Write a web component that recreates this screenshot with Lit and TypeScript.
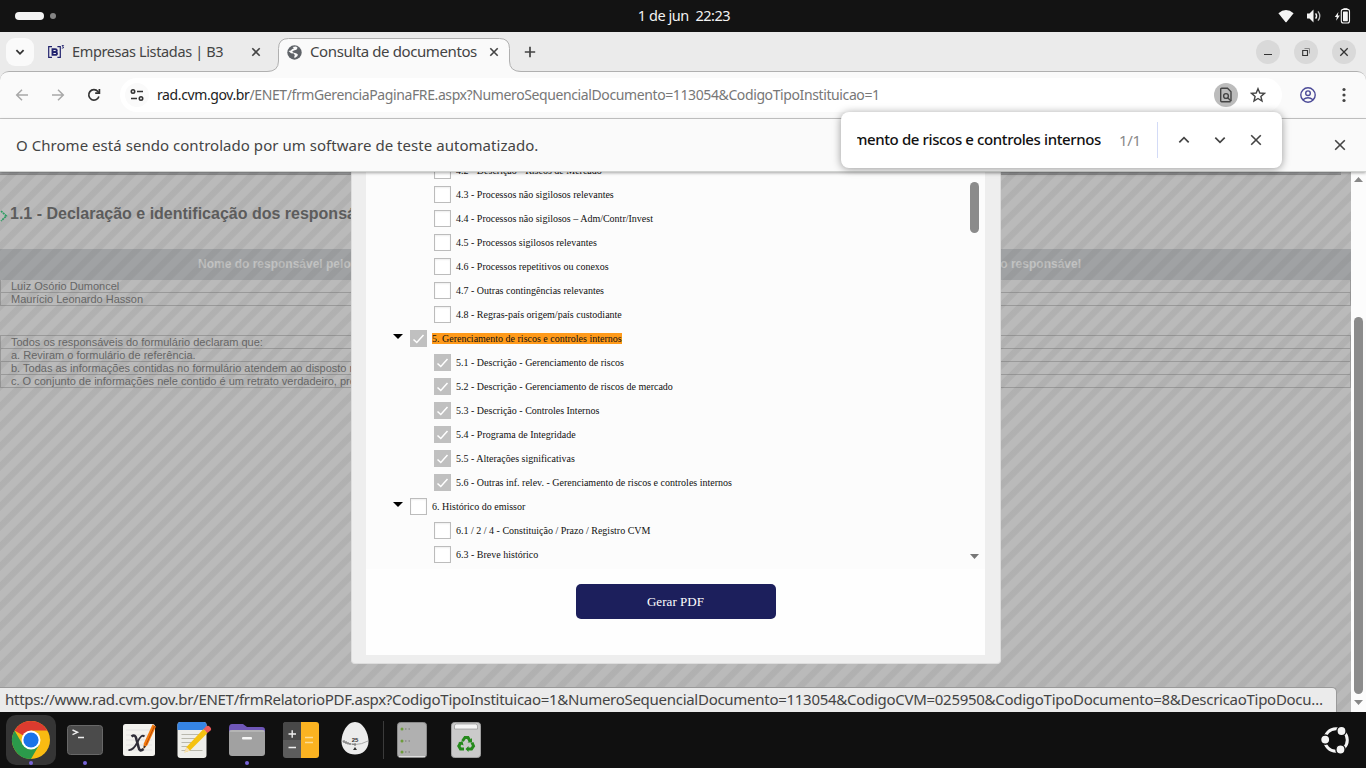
import { LitElement, html, css, svg } from "lit";
import { customElement } from "lit/decorators.js";
import { classMap } from "lit/directives/class-map.js";

interface TreeRow {
  text: string;
  level: number;
  checked?: boolean;
  hit?: boolean;
}

const ROWS: TreeRow[] = [
  { text: "4.2 - Descrição - Riscos de Mercado", level: 1 },
  { text: "4.3 - Processos não sigilosos relevantes", level: 1 },
  { text: "4.4 - Processos não sigilosos – Adm/Contr/Invest", level: 1 },
  { text: "4.5 - Processos sigilosos relevantes", level: 1 },
  { text: "4.6 - Processos repetitivos ou conexos", level: 1 },
  { text: "4.7 - Outras contingências relevantes", level: 1 },
  { text: "4.8 - Regras-país origem/país custodiante", level: 1 },
  { text: "5. Gerenciamento de riscos e controles internos", level: 0, checked: true, hit: true },
  { text: "5.1 - Descrição - Gerenciamento de riscos", level: 1, checked: true },
  { text: "5.2 - Descrição - Gerenciamento de riscos de mercado", level: 1, checked: true },
  { text: "5.3 - Descrição - Controles Internos", level: 1, checked: true },
  { text: "5.4 - Programa de Integridade", level: 1, checked: true },
  { text: "5.5 - Alterações significativas", level: 1, checked: true },
  { text: "5.6 - Outras inf. relev. - Gerenciamento de riscos e controles internos", level: 1, checked: true },
  { text: "6. Histórico do emissor", level: 0 },
  { text: "6.1 / 2 / 4 - Constituição / Prazo / Registro CVM", level: 1 },
  { text: "6.3 - Breve histórico", level: 1 },
];

const cross = (s: number) => html`<svg width="12" height="12" viewBox="0 0 12 12" fill="none" stroke="#444" stroke-width="1.6"><path d="M${6 - s} ${6 - s}L${6 + s} ${6 + s}M${6 + s} ${6 - s}L${6 - s} ${6 + s}" /></svg>`;

@customElement("system-bar")
export class SystemBar extends LitElement {
  static styles = css`
    :host { display: grid; grid-template-columns: 1fr auto 1fr; align-items: center; height: 32px; background: #131313; color: #f2f2f2; font: 15px/20px "Noto Sans", sans-serif; }
    .spaces { display: flex; align-items: center; gap: 6px; padding-left: 15px; }
    .pill { width: 29px; height: 8px; border-radius: 4px; background: #f4f4f4; }
    .dot { width: 6px; height: 6px; border-radius: 50%; background: #858585; }
    .clock { font-size: 14.5px; letter-spacing: -0.45px; white-space: pre; padding: 0 0 3px 2px; }
    .tray { display: flex; justify-content: flex-end; align-items: center; padding-right: 15px; gap: 12px; }
    svg { display: block; }
  `;
  render() {
    return html`
      <div class="spaces"><div class="pill"></div><div class="dot"></div></div>
      <div class="clock">1 de jun  22:23</div>
      <div class="tray">
        <svg width="16" height="16" viewBox="0 0 16 16"><path d="M.4 5.2Q8-1.4 15.6 5.2L8.6 14Q8 14.7 7.4 14Z" fill="#f4f4f4" /></svg>
        <svg width="16" height="16" viewBox="0 0 16 16" fill="none" stroke="#f4f4f4"><path d="M1 5.5H3.5L7.5 1.5V14.5L3.5 10.5H1Z" fill="#f4f4f4" stroke="none" /><path d="M9.6 5.3Q11.6 8 9.6 10.7" stroke-width="1.4" /><path d="M12 3.3Q15.6 8 12 12.7" stroke-width="1.3" stroke="#bbb" /></svg>
        <svg width="17" height="16" viewBox="0 0 17 16"><path d="M4.4 4L.8 9H2.8L2.2 12.8L5.8 7.6H3.8Z" fill="#f4f4f4" /><rect x="7.3" y="1.4" width="8.2" height="13.6" rx="2" fill="none" stroke="#f4f4f4" stroke-width="1.1" /><rect x="9" y="3.4" width="4.8" height="9.8" rx=".6" fill="#f4f4f4" /><path d="M9.5 .8H13.4" stroke="#f4f4f4" stroke-width="1.2" /></svg>
      </div>`;
  }
}

@customElement("tab-strip")
export class TabStrip extends LitElement {
  static styles = css`
    :host { display: flex; align-items: center; height: 39px; background: #ebebeb; color: #444; font: 15px/20px "Noto Sans", sans-serif; padding-left: 6px; }
    svg { display: block; flex: none; }
    .search { display: grid; place-items: center; width: 28px; height: 28px; border-radius: 9px; background: #fafafa; margin-top: 1px; }
    .tab { display: flex; align-items: center; box-sizing: border-box; height: 39px; position: relative; padding-top: 1px; }
    .first { width: 244px; padding-left: 13px; }
    .active { width: 232px; padding-left: 9px; }
    .shape { position: absolute; left: -12px; top: 0; }
    .label { position: relative; white-space: nowrap; padding-bottom: 2px; }
    .first .label { width: 178px; padding-left: 7px; margin-right: 0; font-size: 14.5px; letter-spacing: -0.36px; }
    .active .label { width: 178px; padding-left: 8px; letter-spacing: -0.4px; }
    .glyph { position: relative; }
    .plus { margin: 1px 0 0 14px; }
    .controls { display: flex; gap: 14px; margin: 1px 10px 0 auto; }
    .ctl { display: grid; place-items: center; width: 24px; height: 24px; border-radius: 50%; background: #d9d9d9; }
  `;
  render() {
    return html`
      <div class="search"><svg width="12" height="12" viewBox="0 0 12 12"><path d="M2.4 4.2L6 7.8L9.6 4.2" fill="none" stroke="#333" stroke-width="1.8" /></svg></div>
      <div class="tab first">
        <svg width="18" height="16" viewBox="0 0 18 16" fill="none" stroke="#23246f" stroke-width="1.2"><path d="M5 2.6H1.7V13.4H5M10.4 2.6H13.3V13.4H10.4" /><path d="M5.5 5.1V10.9H8.3Q10 10.9 10 9.4Q10 8.2 8.7 8Q9.8 7.7 9.8 6.5Q9.8 5.1 8.2 5.1ZM5.5 8H8.6" stroke-width="1.9" /><path d="M14.8 1.5H16.6L15.6 2.6Q17 2.8 16.4 3.9L14.8 4.2" stroke-width=".9" /></svg>
        <div class="label">Empresas Listadas | B3</div>
        ${cross(3.7)}
      </div>
      <div class="tab active">
        <svg class="shape" width="256" height="40" viewBox="0 0 256 40"><path d="M0 40V39.5H1Q12.5 39.5 12.5 29V16.5Q12.5 6.5 22.5 6.5H233.5Q243.5 6.5 243.5 16.5V29Q243.5 39.5 255 39.5H256V40Z" fill="#fafafa" /><path d="M0 39.5H1Q12.5 39.5 12.5 29V16.5Q12.5 6.5 22.5 6.5H233.5Q243.5 6.5 243.5 16.5V29Q243.5 39.5 255 39.5H256" fill="none" stroke="#b0b0b0" /></svg>
        <svg class="glyph" width="15" height="15" viewBox="0 0 15 15"><circle cx="7.5" cy="7.5" r="7.2" fill="#5f6368" /><path d="M1.5 6L4 8.2L6.8 8.6L7.8 10.2L7 12.6L8.2 12.8L10.5 11L10.8 9.2L9 8.2L6 7.6L5.3 6.3L7.5 5.3L9.5 4.8L10.6 2.7L9 1.6L5.6 2L7 3.2L5 4.2L3.8 5.6Z" fill="#fafafa" /></svg>
        <div class="label">Consulta de documentos</div>
        <div class="glyph">${cross(3.7)}</div>
      </div>
      <svg class="plus" width="12" height="12" viewBox="0 0 12 12"><path d="M6 .8V11.2M.8 6H11.2" stroke="#444" stroke-width="1.7" /></svg>
      <div class="controls">
        <div class="ctl"><svg width="12" height="12" viewBox="0 0 12 12"><path d="M2 8.5H10" stroke="#333" /></svg></div>
        <div class="ctl"><svg width="12" height="12" viewBox="0 0 12 12" fill="none" stroke="#333"><path d="M2.7 4.5H7.5V9.5H2.7Z" stroke-width="1.1" /><path d="M4.5 2.5H9.5V7.5" stroke="#888" /></svg></div>
        <div class="ctl"><svg width="12" height="12" viewBox="0 0 12 12"><path d="M2.3 2.3L9.7 9.7M9.7 2.3L2.3 9.7" stroke="#333" stroke-width="1.3" /></svg></div>
      </div>`;
  }
}

@customElement("address-bar")
export class AddressBar extends LitElement {
  static styles = css`
    :host { display: block; background: #ebebeb; height: 48px; }
    .bar { box-sizing: border-box; height: 48px; display: flex; align-items: center; background: #fafafa; border-top: 1px solid #b0b0b0; border-bottom: 1px solid #c9c9c9; border-radius: 9px 9px 0 0; padding-left: 14px; }
    svg { display: block; flex: none; }
    .nav { display: flex; gap: 20px; width: 106px; }
    .omni { box-sizing: border-box; display: flex; align-items: center; width: 1162px; height: 34px; border-radius: 17px; background: #fff; padding: 0 16px 0 5px; }
    .site { display: grid; place-items: center; width: 24px; height: 24px; border-radius: 50%; background: #fafafa; }
    .url { flex: 1; padding: 0 0 1px 8px; font: 14px/20px "Noto Sans", sans-serif; letter-spacing: -0.39px; color: #777; white-space: nowrap; }
    .host { color: #222; }
    .find { display: grid; place-items: center; width: 24px; height: 24px; border-radius: 50%; background: #bcbcbc; margin-right: 12px; }
    .me { margin-left: 18px; }
    .more { margin-left: 25px; }
  `;
  render() {
    return html`<div class="bar">
      <div class="nav">
        <svg width="16" height="16" viewBox="0 0 16 16" fill="none" stroke="#a8a8a8" stroke-width="1.5"><path d="M14 8H3M8 2.7L2.7 8L8 13.3" /></svg>
        <svg width="16" height="16" viewBox="0 0 16 16" fill="none" stroke="#a8a8a8" stroke-width="1.5"><path d="M2 8H13M8 2.7L13.3 8L8 13.3" /></svg>
        <svg width="16" height="16" viewBox="0 0 16 16" fill="none" stroke="#333" stroke-width="1.7"><path d="M12.9 9.5A5.2 5.2 0 1 1 11.9 4.5L13.3 6" /><path d="M13.4 2V6.2H9.2" /></svg>
      </div>
      <div class="omni">
        <div class="site"><svg width="16" height="16" viewBox="0 0 16 16" fill="none" stroke="#333" stroke-width="1.6"><circle cx="4" cy="4.5" r="1.7" /><path d="M8 4.5H14M2 11.5H8" /><circle cx="12" cy="11.5" r="1.7" /></svg></div>
        <div class="url"><span class="host">rad.cvm.gov.br</span>/ENET/frmGerenciaPaginaFRE.aspx?NumeroSequencialDocumento=113054&amp;CodigoTipoInstituicao=1</div>
        <div class="find"><svg width="16" height="16" viewBox="0 0 16 16" fill="none" stroke="#444" stroke-width="1.4"><path d="M13 14.3V4.7L9.5 1.2H3.7Q2.7 1.2 2.7 2.2V13.8Q2.7 14.8 3.7 14.8H12.6" /><circle cx="8" cy="9" r="2.4" /><path d="M9.7 10.7L13 14" /></svg></div>
        <svg width="16" height="16" viewBox="0 0 16 16"><path d="M8 1.7L9.8 6L14.4 6.4L10.9 9.4L12 14L8 11.5L4 14L5.1 9.4L1.6 6.4L6.2 6Z" fill="none" stroke="#444" stroke-width="1.4" /></svg>
      </div>
      <svg class="me" width="16" height="16" viewBox="0 0 16 16" fill="none" stroke="#4b4a97" stroke-width="1.4"><circle cx="8" cy="8" r="7.2" /><circle cx="8" cy="6.2" r="2.3" /><path d="M3 12.8Q8 8.6 13 12.8" /></svg>
      <svg class="more" width="6" height="16" viewBox="0 0 6 16" fill="#444"><circle cx="3" cy="2.5" r="1.6" /><circle cx="3" cy="8" r="1.6" /><circle cx="3" cy="13.5" r="1.6" /></svg>
    </div>`;
  }
}

@customElement("pdf-dialog")
export class PdfDialog extends LitElement {
  static styles = css`
    :host { display: block; box-sizing: border-box; width: 650px; height: 492px; background: #eee; border: 1px solid #ddd; border-top: 0; border-radius: 0 0 4px 4px; padding: 0 15px 8px 14px; font: 10px/14px "Liberation Serif", serif; color: #111; }
    .body { height: 483px; background: #fefefe; overflow: hidden; }
    .tree { display: flex; height: 397px; background: #fcfcfc; overflow: hidden; }
    .rows { flex: 1; margin-top: -14px; padding-left: 27px; }
    .row { display: flex; height: 24px; align-items: flex-start; }
    .arrow { width: 17px; height: 24px; flex: none; }
    .arrow svg { display: block; margin: 8px 0 0; }
    .indent { width: 24px; flex: none; }
    .box { box-sizing: border-box; flex: none; width: 17px; height: 17px; margin-top: 4px; border: 1px solid #bcbcbc; background: #fff; box-shadow: inset 0 1px 2px #eee; }
    .on { background: #c0c0c0; border-color: #c0c0c0; box-shadow: none; }
    .box svg { display: block; }
    .name { margin: 6px 0 0 5px; line-height: 13px; white-space: nowrap; }
    .mark { background: #ff9a1a; line-height: 11px; height: 11px; margin-top: 7px; }
    .scroll { width: 15px; display: flex; flex-direction: column; justify-content: space-between; padding: 10px 3px 10px 0; box-sizing: border-box; }
    .thumb { width: 9px; height: 51px; border-radius: 5px; background: #8b8b8b; }
    .foot { display: flex; justify-content: center; padding-top: 15px; }
    .btn { width: 200px; height: 35px; border: 0; border-radius: 5px; background: #1c1f5c; color: #fff; font: 13px/34px "Liberation Serif", serif; letter-spacing: 0.05px; padding: 0 1px 0 0; margin-left: 1px; }
  `;
  render() {
    return html`<div class="body">
      <div class="tree">
        <div class="rows">${ROWS.map((r) => html`<div class="row">
          <div class="arrow">${r.level === 0 ? html`<svg width="10" height="5" viewBox="0 0 10 5"><path d="M0 0H10L5 5Z" /></svg>` : ""}</div>
          ${r.level ? html`<div class="indent"></div>` : ""}
          <div class=${classMap({ box: true, on: !!r.checked })}>${r.checked ? html`<svg width="15" height="15" viewBox="0 0 15 15"><path d="M2.5 8.5L5.8 11.5L12.5 4" fill="none" stroke="#fff" stroke-width="1.5" /></svg>` : ""}</div>
          <div class=${classMap({ name: true, mark: !!r.hit })}>${r.text}</div>
        </div>`)}</div>
        <div class="scroll"><div class="thumb"></div><svg width="9" height="5" viewBox="0 0 9 5"><path d="M0 0H9L4.5 5Z" fill="#777" /></svg></div>
      </div>
      <div class="foot"><button class="btn">Gerar PDF</button></div>
    </div>`;
  }
}

@customElement("page-view")
export class PageView extends LitElement {
  static styles = css`
    :host { display: flex; position: relative; height: 540px; overflow: hidden; background: #fcfcfc; font: 11px/13px "Liberation Sans", sans-serif; color: #666; }
    .page { width: 1351px; background: #bababa; position: relative; overflow: hidden; }
    .strip { height: 3px; width: 1341px; box-sizing: border-box; background: #a0a1a3; border-bottom: 1px solid #8f8f8f; }
    .title { display: flex; align-items: center; height: 18px; margin-top: 30px; font: bold 16px/18px "Liberation Sans", sans-serif; color: #5c5c5c; }
    .title svg { margin: 3px 2px 0 0; width: 8px; }
    .head { display: flex; justify-content: space-between; height: 31px; margin-top: 26px; box-sizing: border-box; padding: 0 270px 0 198px; background: #a0a2a4; color: #c2c2c2; font: bold 12px/31px "Liberation Sans", sans-serif; }
    .line { box-sizing: border-box; height: 13px; border: 1px solid #999; border-top: 0; padding-left: 10px; white-space: nowrap; line-height: 13px; }
    .second { margin-top: 29px; border-top: 1px solid #999; }
    .stripes { position: absolute; inset: 0; background: repeating-linear-gradient(135deg, transparent 0 6.7px, rgba(100, 100, 100, 0.11) 7.8px 13.1px, transparent 14.142px); }
    .dialog { position: absolute; left: 351px; top: 0; }
    .scroll { width: 15px; box-sizing: border-box; display: flex; flex-direction: column; align-items: center; padding: 5px 0 5px; }
    .thumb { width: 9px; height: 377px; margin: 135px 0 6px; border-radius: 5px; background: #8b8b8b; }
    .status { position: absolute; left: 0; bottom: 0; width: 1337px; height: 25px; box-sizing: border-box; background: #ebebeb; border-top: 1px solid #999; border-right: 1px solid #999; border-radius: 0 5px 0 0; padding-left: 5px; font: 15px/22px "Noto Sans", sans-serif; letter-spacing: -0.28px; color: #444; white-space: nowrap; }
  `;
  render() {
    return html`
      <div class="page">
        <div class="strip"></div>
        <div class="title"><svg width="8" height="12" viewBox="0 0 8 12"><path d="M1 1L6.3 6L1 11" fill="none" stroke="#2f9d63" stroke-width="1.7" stroke-dasharray="2 .7" /></svg>1.1 - Declaração e identificação dos responsáveis</div>
        <div class="head"><div>Nome do responsável pelo</div><div>Cargo do responsável</div></div>
        <div class="line">Luiz Osório Dumoncel</div>
        <div class="line">Maurício Leonardo Hasson</div>
        <div class="second">
          <div class="line">Todos os responsáveis do formulário declaram que:</div>
          <div class="line">a. Reviram o formulário de referência.</div>
          <div class="line">b. Todas as informações contidas no formulário atendem ao disposto na Resolução</div>
          <div class="line">c. O conjunto de informações nele contido é um retrato verdadeiro, preciso e completo</div>
        </div>
        <div class="stripes"></div>
        <pdf-dialog class="dialog"></pdf-dialog>
      </div>
      <div class="scroll">
        <svg width="9" height="5" viewBox="0 0 9 5"><path d="M0 5H9L4.5 0Z" fill="#888" /></svg>
        <div class="thumb"></div>
        <svg width="9" height="5" viewBox="0 0 9 5"><path d="M0 0H9L4.5 5Z" fill="#888" /></svg>
      </div>
      <div class="status">https://www.rad.cvm.gov.br/ENET/frmRelatorioPDF.aspx?CodigoTipoInstituicao=1&amp;NumeroSequencialDocumento=113054&amp;CodigoCVM=025950&amp;CodigoTipoDocumento=8&amp;DescricaoTipoDocu…</div>`;
  }
}

const APPS = {
  chrome: svg`<circle cx="25" cy="25" r="19" fill="#f9bb12" /><path d="M25 25L8.5 15.5A19 19 0 0 1 41.5 15.5H25Z" fill="#dc3b2f" /><path d="M8.5 15.5A19 19 0 0 0 25 44L33.2 29.8L25 25L16.8 29.8Z" fill="#2b9a4b" /><circle cx="25" cy="25" r="9.5" fill="#fff" /><circle cx="25" cy="25" r="7.6" fill="#1a73e8" />`,
  terminal: svg`<rect x="7.5" y="10.5" width="35" height="29" rx="3" fill="#4b4b4b" stroke="#686868" /><path d="M12.5 15L17.5 17.3L12.5 19.6M18 22.5H24" fill="none" stroke="#eee" stroke-width="1.4" />`,
  xournal: svg`<rect x="9" y="9" width="32" height="32" rx="2.5" fill="#f3f2ee" /><path d="M12 15H38M12 20H38M12 25H38M12 30H38M12 35H38" stroke="#ddd" stroke-width=".7" /><path d="M17.5 21.5Q21.500 18.500 22.500 24.500L24.500 32Q25.500 37.500 29.500 34" fill="none" stroke="#2f2d38" stroke-width="2.6" /><path d="M30.500 21.500Q27.500 18.500 23.500 27T14.500 35" fill="none" stroke="#2f2d38" stroke-width="1.8" /><path d="M38.500 9.500L42 11.500L33.500 30L29.500 34L29.800 28.500Z" fill="#f47a0c" /><path d="M40.500 11L32 30" stroke="#b84a05" stroke-width="1" /><path d="M29.700 30.500L29.500 34L32 31.500Z" fill="#333" />`,
  editor: svg`<g transform="translate(1.500 0)"><rect x="8" y="7" width="29" height="36" rx="3" fill="#eeeeea" /><path d="M8 15V10Q8 7 11 7H34Q37 7 37 10V15Z" fill="#3584e4" /><path d="M12 19.500H31M12 23.500H28M12 27.500H26M12 31.500H23M12 35.500H33" stroke="#b9b8ad" /><path d="M34 14L38 18L20.500 35.500L15 37.500L17 32Z" fill="#f5c211" /><path d="M17 32L20.500 35.500L15 37.500Z" fill="#f6e0b5" /><path d="M34 14L36.500 11.500Q38.500 10 40.500 12T41 15.500L38 18Z" fill="#ed5b5b" /></g>`,
  files: svg`<path d="M7 13Q7 9 10 9H21L25 12H40Q43 12 43 15V24H7Z" fill="#6f57b8" /><rect x="7" y="15" width="36" height="26" rx="3" fill="#a1a1a1" /><path d="M7.5 16H42.5" stroke="#c7c7c7" /><rect x="20" y="22" width="10" height="2.5" rx="1" fill="#f6f6f6" />`,
  calc: svg`<path d="M10 7H25V43H10Q7 43 7 40V10Q7 7 10 7Z" fill="#5c5c5c" /><path d="M7 10Q7 7 10 7H25V25H7Z" fill="#484848" /><path d="M25 7H40Q43 7 43 10V40Q43 43 40 43H25Z" fill="#fbb321" /><path d="M12.5 19H20M16.2 15.2V22.8M12.5 32.5H20" stroke="#eee" stroke-width="1.4" /><path d="M29 22.500H37M29 27.500H37" stroke="#fbdc95" stroke-width="1.6" />`,
  egg: svg`<path d="M25 7C33 7 38.500 18 38.500 26.500C38.500 35 32 39.500 25 39.500S11.500 35 11.500 26.500C11.500 18 17 7 25 7Z" fill="#ececec" /><path d="M12 26Q25 33 38 26" fill="none" stroke="#999" stroke-width=".8" /><path d="M14 25V28M16 26V29M18 27V29.500M20 28V30M25 28V31M23 28.500V30" stroke="#444" stroke-width=".8" /><path d="M23 35L25 32L27 35Z" fill="#333" /><text x="25" y="27" font-size="6" font-weight="bold" font-family="Liberation Sans, sans-serif" text-anchor="middle" fill="#333">25</text>`,
  drives: svg`<rect x="10.500" y="7.500" width="29" height="35" rx="3" fill="#b0b0b0" stroke="#8a8a8a" /><path d="M12 41.500H38" stroke="#ddd" /><g fill="#6c9b3a"><circle cx="15" cy="14" r="1.500" /><circle cx="15" cy="26" r="1.500" /><circle cx="15" cy="37" r="1.500" /></g><path d="M18 14H23.500M18 26H23.500M18 37H23.500" stroke="#777" stroke-dasharray="1.500 2" />`,
  trash: svg`<rect x="10.500" y="7.500" width="29" height="35" rx="3" fill="#cacaca" stroke="#a0a0a0" /><path d="M13.500 14V11Q13.500 9 15.500 9H34.500Q36.500 9 36.500 11V14Z" fill="#f5f5f5" stroke="#888" stroke-width=".6" /><path d="M21.500 26L24 22.500H27L29 26M31 27.500L32.500 31L30.500 34H27M23 34H19.500L17.800 31L20 27.500" fill="none" stroke="#258a1c" stroke-width="3" /><path d="M26.500 27.500L31 27.500V23ZM27.500 31V37L24.500 34ZM17 28L21.500 26L22.500 30.500Z" fill="#258a1c" />`,
};

@customElement("app-dock")
export class AppDock extends LitElement {
  static styles = css`
    :host { display: flex; align-items: center; box-sizing: border-box; height: 56px; background: #101010; padding: 0 17px 0 6px; gap: 4px; }
    .app { width: 50px; height: 50px; border-radius: 10px; display: flex; position: relative; }
    .focus { background: #353535; }
    .open::after { content: ""; position: absolute; left: 23px; top: 46px; width: 4px; height: 4px; border-radius: 50%; background: #7764d8; }
    .sep { width: 1px; height: 38px; background: #3b3b3b; margin: 0 -1px; }
    .logo { margin-left: auto; width: 28px; height: 28px; }
    svg { display: block; }
  `;
  private app(name: keyof typeof APPS, open = false, focus = false) {
    return html`<div class=${classMap({ app: true, open, focus })}><svg width="50" height="50" viewBox="0 0 50 50">${APPS[name]}</svg></div>`;
  }
  render() {
    return html`
      ${this.app("chrome", true, true)}${this.app("terminal", true)}${this.app("xournal")}${this.app("editor")}${this.app("files", true)}${this.app("calc")}${this.app("egg")}
      <div class="sep"></div>
      ${this.app("drives")}${this.app("trash")}
      <svg class="logo" viewBox="0 0 28 28"><circle cx="15" cy="14" r="11.3" fill="none" stroke="#f4f4f4" stroke-width="3" /><g fill="#f4f4f4" stroke="#101010" stroke-width="1.4"><circle cx="4.200" cy="13.600" r="4.600" /><circle cx="20.500" cy="5" r="4.600" /><circle cx="19.500" cy="23.500" r="4.600" /></g></svg>`;
  }
}

@customElement("app-root")
export class AppRoot extends LitElement {
  static styles = css`
    :host { display: block; position: relative; width: 1366px; height: 768px; overflow: hidden; font: 15px/20px "Noto Sans", sans-serif; }
    .info { position: relative; z-index: 1; box-sizing: border-box; display: flex; align-items: center; justify-content: space-between; height: 53px; padding: 0 20px 0 16px; background: #fafafa; color: #444; border-bottom: 1px solid #d0d2d0; box-shadow: 0 1px 3px rgba(0, 0, 0, 0.35); letter-spacing: 0.04px; }
    .info span { padding-bottom: 1px; }
    .finder { position: absolute; z-index: 2; left: 841px; top: 112px; width: 441px; height: 56px; box-sizing: border-box; border-radius: 8px; background: #fff; box-shadow: 0 1px 8px rgba(0, 0, 0, 0.4); display: flex; align-items: center; padding: 0 20px 0 16px; }
    .query { width: 244px; display: flex; justify-content: flex-end; overflow: hidden; white-space: nowrap; font-weight: 500; color: #111; letter-spacing: -0.38px; padding-bottom: 2px; }
    .count { margin-left: 18px; width: 38px; color: #888; letter-spacing: -0.3px; padding-bottom: 1px; }
    .rule { width: 1px; height: 36px; background: #d3dbf7; margin-right: 20px; }
    .finder svg { display: block; margin-right: 24px; }
    .finder svg:last-child { margin: 0; }
  `;
  render() {
    return html`
      <system-bar></system-bar>
      <tab-strip></tab-strip>
      <address-bar></address-bar>
      <div class="info"><span>O Chrome está sendo controlado por um software de teste automatizado.</span>${cross(4.8)}</div>
      <page-view></page-view>
      <app-dock></app-dock>
      <div class="finder">
        <div class="query">mento de riscos e controles internos</div>
        <div class="count">1/1</div>
        <div class="rule"></div>
        <svg width="12" height="12" viewBox="0 0 12 12"><path d="M1.3 8.3L6 3.6L10.7 8.3" fill="none" stroke="#444" stroke-width="1.7" /></svg>
        <svg width="12" height="12" viewBox="0 0 12 12"><path d="M1.3 3.7L6 8.4L10.7 3.7" fill="none" stroke="#444" stroke-width="1.7" /></svg>
        ${cross(4.8)}
      </div>`;
  }
}
